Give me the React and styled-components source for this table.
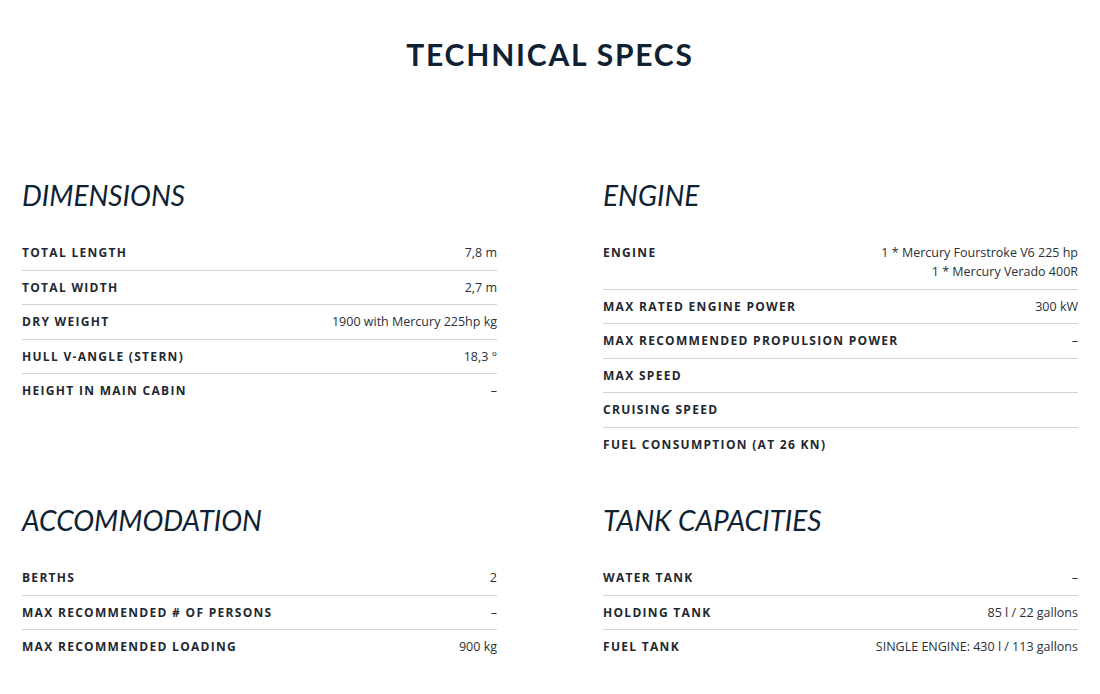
import React from "react";
import styled, { createGlobalStyle } from "styled-components";

const Global = createGlobalStyle`
  html, body { margin: 0; padding: 0; background: #fff; }
  body { font-family: "Open Sans", "Noto Sans", sans-serif; color: #0e2233; }
  * { box-sizing: border-box; }
`;

const Page = styled.div`
  width: 1100px;
  padding: 36px 22px 0;
`;

const Title = styled.h1`
  margin: 0;
  text-align: center;
  font-family: "Lato", "Noto Sans", sans-serif;
  font-weight: 700;
  font-size: 30px;
  line-height: 36px;
  letter-spacing: 1.8px;
  color: #0e2233;
`;

const Grid = styled.div`
  display: grid;
  grid-template-columns: 475px 475px;
  column-gap: 106px;
  row-gap: 41px;
  margin-top: 105px;
`;

const Section = styled.section`
  display: flex;
  flex-direction: column;
`;

const Heading = styled.h2`
  margin: 0 0 23px;
  font-family: "Lato", "Noto Sans", sans-serif;
  font-style: italic;
  font-weight: 400;
  font-size: 28px;
  line-height: 36px;
  color: #0e2233;
`;

const Row = styled.div`
  display: flex;
  justify-content: space-between;
  align-items: flex-start;
  padding: 7px 0 7.5px;
  border-bottom: 1px solid #d3d3d3;
  &:last-child { border-bottom: none; }
`;

const Label = styled.div`
  font-family: "Open Sans", "Noto Sans", sans-serif;
  font-weight: 700;
  font-size: 12px;
  line-height: 19px;
  letter-spacing: 1.3px;
  color: #1e2830;
  text-transform: uppercase;
`;

const Value = styled.div`
  font-family: "Open Sans", "Noto Sans", sans-serif;
  font-weight: 400;
  font-size: 12.5px;
  line-height: 19px;
  color: #2a3038;
  text-align: right;
`;

const data = [
  {
    title: "DIMENSIONS",
    rows: [
      ["TOTAL LENGTH", "7,8 m"],
      ["TOTAL WIDTH", "2,7 m"],
      ["DRY WEIGHT", "1900 with Mercury 225hp kg"],
      ["HULL V-ANGLE (STERN)", "18,3 °"],
      ["HEIGHT IN MAIN CABIN", "–"],
    ],
  },
  {
    title: "ENGINE",
    rows: [
      ["ENGINE", ["1 * Mercury Fourstroke V6 225 hp", "1 * Mercury Verado 400R"]],
      ["MAX RATED ENGINE POWER", "300 kW"],
      ["MAX RECOMMENDED PROPULSION POWER", "–"],
      ["MAX SPEED", ""],
      ["CRUISING SPEED", ""],
      ["FUEL CONSUMPTION (AT 26 KN)", ""],
    ],
  },
  {
    title: "ACCOMMODATION",
    rows: [
      ["BERTHS", "2"],
      ["MAX RECOMMENDED # OF PERSONS", "–"],
      ["MAX RECOMMENDED LOADING", "900 kg"],
    ],
  },
  {
    title: "TANK CAPACITIES",
    rows: [
      ["WATER TANK", "–"],
      ["HOLDING TANK", "85 l / 22 gallons"],
      ["FUEL TANK", "SINGLE ENGINE: 430 l / 113 gallons"],
    ],
  },
];

export default function App() {
  return (
    <>
      <Global />
      <Page>
        <Title>TECHNICAL SPECS</Title>
        <Grid>
          {data.map((s) => (
            <Section key={s.title}>
              <Heading>{s.title}</Heading>
              {s.rows.map(([l, v]) => (
                <Row key={l}>
                  <Label>{l}</Label>
                  <Value>
                    {Array.isArray(v)
                      ? v.map((line) => <div key={line}>{line}</div>)
                      : v}
                  </Value>
                </Row>
              ))}
            </Section>
          ))}
        </Grid>
      </Page>
    </>
  );
}
